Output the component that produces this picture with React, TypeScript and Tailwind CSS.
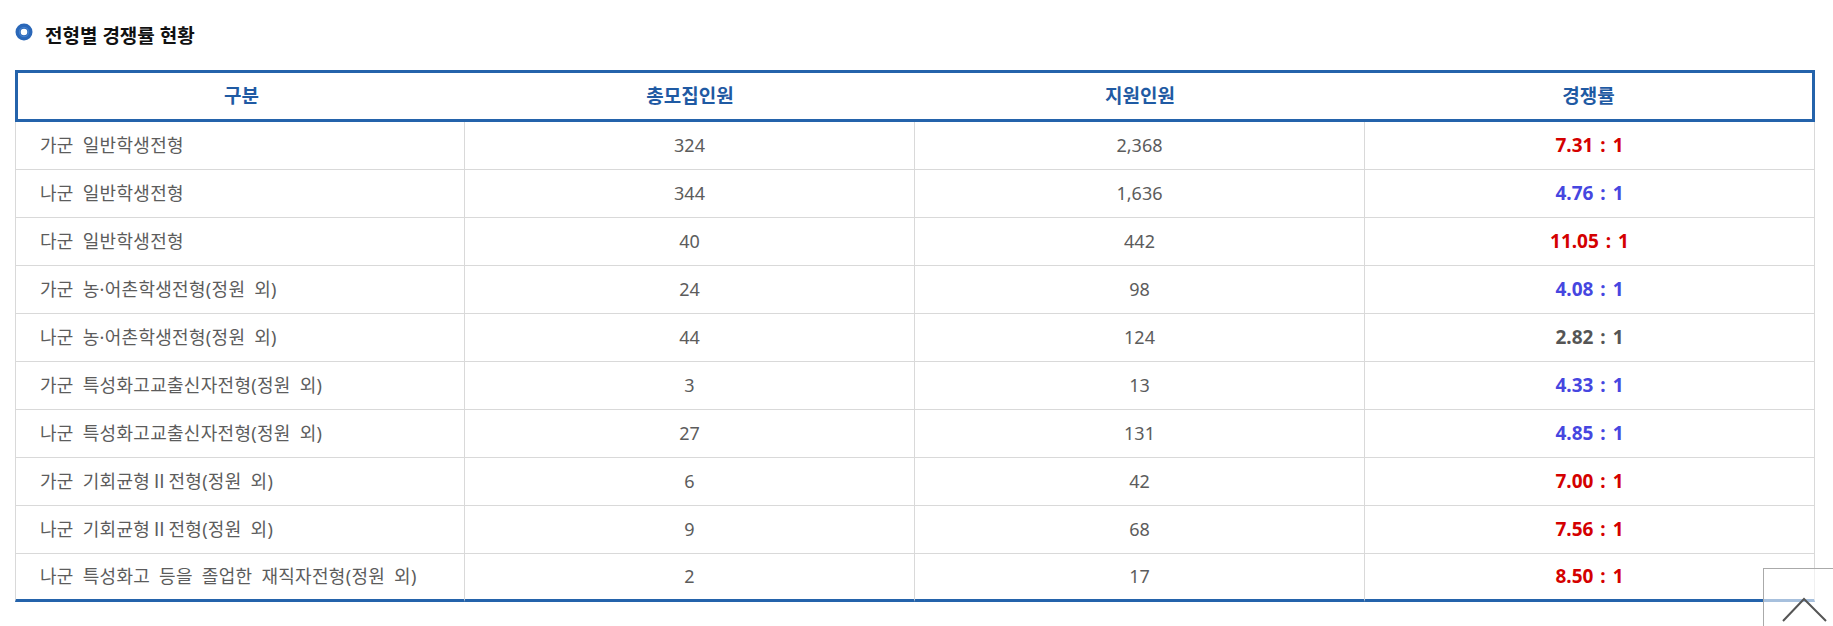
import React from 'react'

type Row = { name: string; quota: string; applied: string; ratio: string; tone: 'red' | 'blue' | 'gray' }

const rows: Row[] = [
  { name: '가군 일반학생전형', quota: '324', applied: '2,368', ratio: '7.31 : 1', tone: 'red' },
  { name: '나군 일반학생전형', quota: '344', applied: '1,636', ratio: '4.76 : 1', tone: 'blue' },
  { name: '다군 일반학생전형', quota: '40', applied: '442', ratio: '11.05 : 1', tone: 'red' },
  { name: '가군 농·어촌학생전형(정원 외)', quota: '24', applied: '98', ratio: '4.08 : 1', tone: 'blue' },
  { name: '나군 농·어촌학생전형(정원 외)', quota: '44', applied: '124', ratio: '2.82 : 1', tone: 'gray' },
  { name: '가군 특성화고교출신자전형(정원 외)', quota: '3', applied: '13', ratio: '4.33 : 1', tone: 'blue' },
  { name: '나군 특성화고교출신자전형(정원 외)', quota: '27', applied: '131', ratio: '4.85 : 1', tone: 'blue' },
  { name: '가군 기회균형Ⅱ전형(정원 외)', quota: '6', applied: '42', ratio: '7.00 : 1', tone: 'red' },
  { name: '나군 기회균형Ⅱ전형(정원 외)', quota: '9', applied: '68', ratio: '7.56 : 1', tone: 'red' },
  { name: '나군 특성화고 등을 졸업한 재직자전형(정원 외)', quota: '2', applied: '17', ratio: '8.50 : 1', tone: 'red' },
]

const toneClass = {
  red: 'text-[#d40000]',
  blue: 'text-[#4646e0]',
  gray: 'text-[#555555]',
}

function TitleIcon() {
  return (
    <svg width="18" height="18" viewBox="0 0 18 18" className="shrink-0 self-start mt-[3px]">
      <circle cx="9" cy="9" r="5.9" fill="none" stroke="#2a67b8" strokeWidth="5.2" />
      <circle cx="9" cy="9" r="4.6" fill="none" stroke="#5590d8" strokeWidth="1.2" opacity="0.6" />
    </svg>
  )
}

export default function App() {
  const last = rows.length - 1
  return (
    <main className="relative h-[626px] w-full overflow-hidden bg-white px-[15px] pt-[20px] font-['Noto_Sans','Noto_Sans_CJK_KR',sans-serif]">
      <h2 className="flex h-[32px] items-center gap-[12px] text-[19px] font-bold text-[#111]">
        <TitleIcon />
        <span>전형별 경쟁률 현황</span>
      </h2>

      <table className="mt-[18px] w-[1800px] table-fixed border-separate border-spacing-0">
        <thead>
          <tr>
            {['구분', '총모집인원', '지원인원', '경쟁률'].map((h, i) => (
              <th
                key={h}
                className={
                  'h-[52px] w-[450px] border-y-[3px] border-[#2463ab] p-0 text-center text-[19px] font-bold text-[#1f5aa3] ' +
                  (i === 0 ? 'border-l-[3px] ' : '') +
                  (i === 3 ? 'border-r-[3px]' : '')
                }
              >
                {h}
              </th>
            ))}
          </tr>
        </thead>
        <tbody>
          {rows.map((r, i) => {
            const bottom = i === last ? 'border-b-[3px] border-b-[#2463ab]' : 'border-b border-b-[#d9d9d9]'
            return (
              <tr key={r.name} className="text-[18px] text-[#5c5c5c]">
                <td
                  className={`h-[48px] border-l border-r border-[#d9d9d9] pl-[24px] text-left tracking-[0.3px] [word-spacing:4px] ${bottom}`}
                >
                  {r.name}
                </td>
                <td className={`h-[48px] border-r border-[#d9d9d9] text-center ${bottom}`}>{r.quota}</td>
                <td className={`h-[48px] border-r border-[#d9d9d9] text-center ${bottom}`}>{r.applied}</td>
                <td
                  className={`h-[48px] border-r border-[#d9d9d9] text-center text-[19px] font-bold [word-spacing:2px] ${toneClass[r.tone]} ${bottom}`}
                >
                  {r.ratio}
                </td>
              </tr>
            )
          })}
        </tbody>
      </table>

      <button className="absolute left-[1763px] top-[568px] h-[80px] w-[80px] border border-[#aaaaaa] bg-white/60">
        <svg width="80" height="80" viewBox="0 0 80 80" className="absolute left-0 top-0">
          <polyline points="19,52 40,30 62,52" fill="none" stroke="#555" strokeWidth="2" />
        </svg>
      </button>
    </main>
  )
}
